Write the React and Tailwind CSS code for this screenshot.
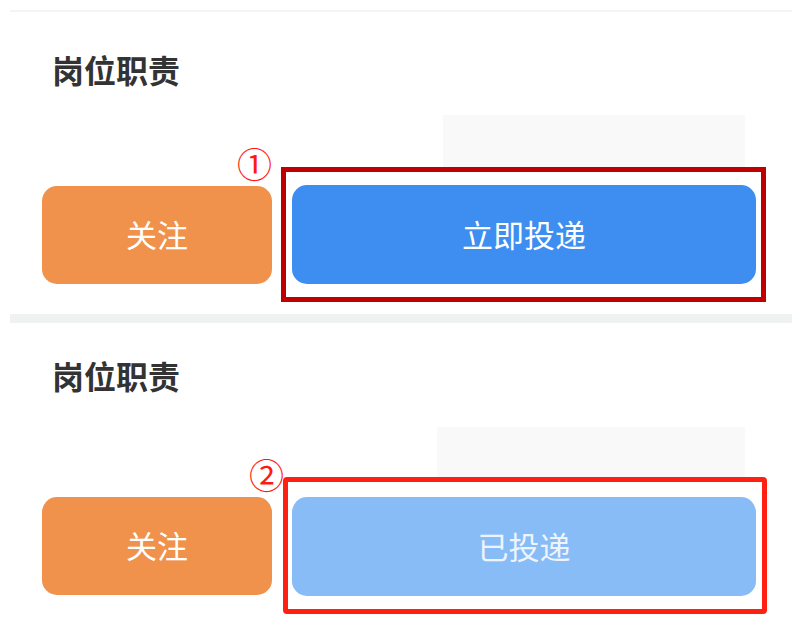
const font = { fontFamily: '"Noto Sans CJK SC", "Noto Sans", sans-serif' };

function Section({ applied }) {
  return (
    <section>
      {/* title */}
      <h2 className="pl-[42px] text-[32px] leading-none font-bold text-[#333]">
        岗位职责
      </h2>

      {/* faded content behind */}
      <div
        className={
          applied
            ? "ml-[427px] mt-[36px] h-[50px] w-[308px] bg-[#f9f9f9]"
            : "ml-[433px] mt-[30px] h-[52px] w-[302px] bg-[#f9f9f9]"
        }
      />

      <div className="flex items-center pl-[32px]">
        {/* follow */}
        <button className="flex h-[98px] w-[230px] items-center justify-center rounded-[15px] bg-[#f0924b] text-[31px] text-white">
          关注
        </button>

        {/* apply, annotated */}
        <div
          className={
            applied
              ? "relative ml-[11px] rounded-[4px] border-[5px] border-[#ff2012] pt-[15px] pr-[6px] pb-[13px] pl-[4px]"
              : "relative ml-[9px] border-[5px] border-[#c00000] pt-[13px] pr-[5px] pb-[13px] pl-[6px]"
          }
        >
          <span
            className={
              applied
                ? "absolute -top-[26px] -left-[39px] text-[35px] leading-none text-[#ff1a0f]"
                : "absolute -top-[27px] -left-[49px] text-[35px] leading-none text-[#ff1a0f]"
            }
          >
            {applied ? "②" : "①"}
          </span>
          <button
            className={
              applied
                ? "flex h-[99px] w-[464px] items-center justify-center rounded-[15px] bg-[#88bcf7] text-[31px] text-[#eef4fc]"
                : "flex h-[99px] w-[464px] items-center justify-center rounded-[15px] bg-[#3d8ef0] text-[31px] text-white"
            }
          >
            {applied ? "已投递" : "立即投递"}
          </button>
        </div>
      </div>
    </section>
  );
}

export default function App() {
  return (
    <main
      className="h-[624px] w-[802px] overflow-hidden bg-white px-[10px]"
      style={font}
    >
      <div className="mt-[10px] h-[2px] bg-[#f4f4f4]" />
      <div className="pt-[41px]">
        <Section applied={false} />
      </div>
      <div className="mt-[12px] h-[9px] bg-[#eef3f2]" />
      <div className="pt-[36px]">
        <Section applied={true} />
      </div>
    </main>
  );
}
